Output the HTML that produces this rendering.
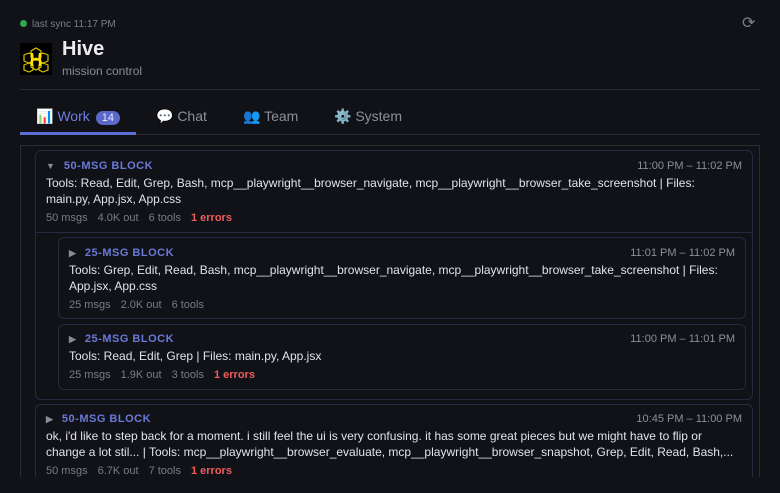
<!DOCTYPE html>
<html><head><meta charset="utf-8"><style>
*{box-sizing:border-box;margin:0;padding:0}
body{width:780px;height:493px;background:#111218;font-family:"Liberation Sans",sans-serif;color:#e4e4ea;position:relative;overflow:hidden}
.abs{position:absolute}
.sync{left:20px;top:19px;font-size:10px;color:#7c7d88;white-space:nowrap}
.sync i{display:inline-block;width:7px;height:7px;border-radius:50%;background:#2fa84f;margin-right:5px;vertical-align:0}
.title{left:62px;top:38px;font-size:20px;font-weight:bold;color:#ececf0}
.sub{left:62px;top:64px;font-size:12px;color:#8a8b96}
.tabs{left:20px;top:100px;width:740px;height:35px;border-bottom:1px solid #2c2d38}
.tab{position:absolute;top:8px;font-size:14px;color:#8d8e99;white-space:nowrap}
.badge{display:inline-block;background:#5b67c9;color:#e8eaff;font-size:11px;border-radius:8px;padding:1px 6px;margin-left:6px}
.scroll{left:20px;top:145px;width:740px;height:332px;border:1px solid #2a2b35;border-bottom:none;overflow:hidden;background:#111218}
.card{position:absolute;border:1px solid #262a3e;border-radius:6px;background:#111218}
.hd{position:absolute;font-size:11px;font-weight:bold;letter-spacing:.5px;color:#6b79d6;white-space:nowrap}
.hd b{color:#8a8b96;font-size:9px;margin-right:9px;letter-spacing:0}
.tm{position:absolute;font-size:11px;color:#8d8e99;white-space:nowrap}
.tx{position:absolute;font-size:12px;line-height:16px;color:#e2e3ea}
.mt{position:absolute;font-size:11px;color:#7a7b86;white-space:nowrap;word-spacing:0}
.mt span{margin-right:10px}
.mt .e{color:#f05c5c;font-weight:bold}
</style></head><body>
<div class="abs sync"><i></i>last sync 11:17 PM</div>
<div class="abs" style="left:742px;top:13px;font-size:16px;color:#7f808a">⟳</div>
<svg class="abs" style="left:20px;top:43px" width="32" height="32" viewBox="0 0 32 32"><rect width="32" height="32" fill="#000"/><g fill="none" stroke="#d9c300" stroke-width="1.2"><path d="M16 5l5 3v6l-5 3-5-3V8z"/><path d="M9 10l4 2v6l-4 2-5-2v-6z"/><path d="M23 10l5 2v6l-5 2-4-2v-6z"/><path d="M16 15l5 3v6l-5 3-5-3v-6z"/><path d="M9 20l4 2v5l-4 2-5-2v-5z"/><path d="M23 20l5 2v5l-5 2-4-2v-5z"/></g><path d="M12 10v13M20 10v13M12 16.5h8" stroke="#ffe100" stroke-width="2.2"/></svg>
<div class="abs title">Hive</div>
<div class="abs sub">mission control</div>
<div class="abs" style="left:20px;top:89px;width:740px;height:1px;background:#2c2d38"></div>
<div class="abs tabs">
<div class="tab" style="left:16px;color:#6f7de0">📊 Work<span class="badge">14</span></div>
<div class="tab" style="left:136px">💬 Chat</div>
<div class="tab" style="left:223px">👥 Team</div>
<div class="tab" style="left:314px">⚙️ System</div>
<div class="abs" style="left:0;top:32px;width:116px;height:3px;background:#5f6fd8"></div>
</div>
<div class="abs scroll">
<div class="card" style="left:14px;top:4px;width:718px;height:250px">
 <div class="hd" style="left:10px;top:9px"><b>▼</b>50-MSG BLOCK</div>
 <div class="tm" style="right:10px;top:9px">11:00 PM – 11:02 PM</div>
 <div class="tx" style="left:10px;top:24px;width:680px">Tools: Read, Edit, Grep, Bash, mcp__playwright__browser_navigate, mcp__playwright__browser_take_screenshot | Files: main.py, App.jsx, App.css</div>
 <div class="mt" style="left:10px;top:61px"><span>50 msgs</span><span>4.0K out</span><span>6 tools</span><span class="e">1 errors</span></div>
 <div class="abs" style="left:0;top:81px;width:716px;height:1px;background:#262a3e"></div>
 <div class="card" style="left:22px;top:86px;width:688px;height:82px">
  <div class="hd" style="left:10px;top:9px"><b>▶</b>25-MSG BLOCK</div>
  <div class="tm" style="right:10px;top:9px">11:01 PM – 11:02 PM</div>
  <div class="tx" style="left:10px;top:24px;width:665px">Tools: Grep, Edit, Read, Bash, mcp__playwright__browser_navigate, mcp__playwright__browser_take_screenshot | Files: App.jsx, App.css</div>
  <div class="mt" style="left:10px;top:61px"><span>25 msgs</span><span>2.0K out</span><span>6 tools</span></div>
 </div>
 <div class="card" style="left:22px;top:173px;width:688px;height:66px">
  <div class="hd" style="left:10px;top:8px"><b>▶</b>25-MSG BLOCK</div>
  <div class="tm" style="right:10px;top:8px">11:00 PM – 11:01 PM</div>
  <div class="tx" style="left:10px;top:23px;width:665px">Tools: Read, Edit, Grep | Files: main.py, App.jsx</div>
  <div class="mt" style="left:10px;top:44px"><span>25 msgs</span><span>1.9K out</span><span>3 tools</span><span class="e">1 errors</span></div>
 </div>
</div>
<div class="card" style="left:14px;top:258px;width:718px;height:100px">
 <div class="hd" style="left:10px;top:8px"><b>▶</b>50-MSG BLOCK</div>
 <div class="tm" style="right:10px;top:8px">10:45 PM – 11:00 PM</div>
 <div class="tx" style="left:10px;top:23px;width:696px;white-space:nowrap">ok, i'd like to step back for a moment. i still feel the ui is very confusing. it has some great pieces but we might have to flip or<br>change a lot stil... | Tools: mcp__playwright__browser_evaluate, mcp__playwright__browser_snapshot, Grep, Edit, Read, Bash,...</div>
 <div class="mt" style="left:10px;top:60px"><span>50 msgs</span><span>6.7K out</span><span>7 tools</span><span class="e">1 errors</span></div>
</div>
</div>
</body></html>
